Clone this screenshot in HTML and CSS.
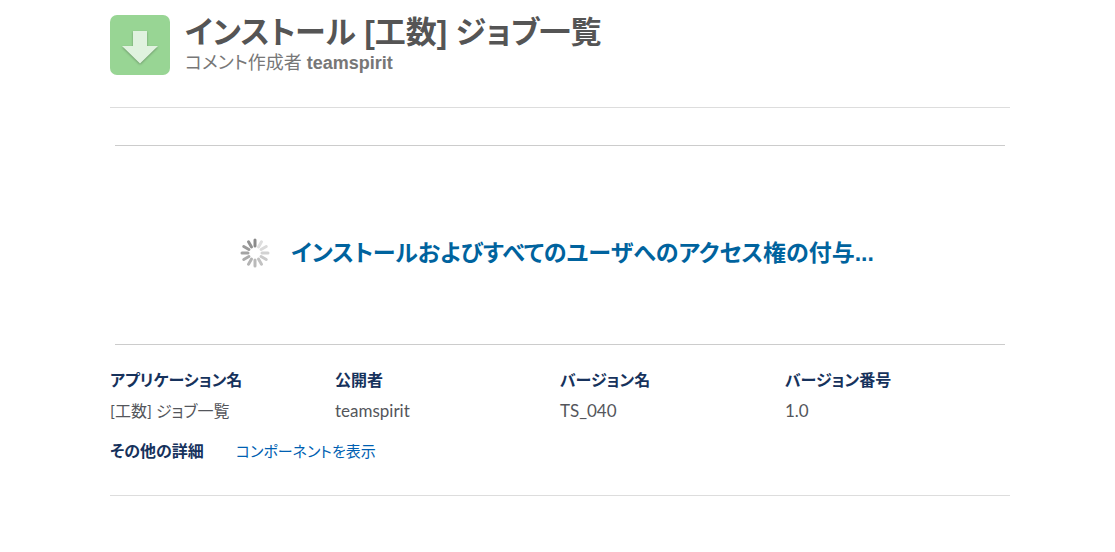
FILE: index.html
```html
<!DOCTYPE html>
<html lang="ja">

<head>
    <meta charset="UTF-8">
    <meta name="viewport" content="width=device-width, initial-scale=1.0">
    <title>インストール [工数] ジョブ一覧</title>
    <link rel="stylesheet" href="styles.css">
</head>

<body>
    <div class="container">
        <header class="header">
            <svg class="icon" viewBox="0 0 60 60" aria-hidden="true">
                <rect width="60" height="60" rx="7" fill="#98d594"/>
                <path class="arrow" d="M23 16h14v15h11L30 48.500 12 31h11z" fill="#e0f2df"/>
            </svg>
            <div>
                <h1 class="title">インストール [工数] ジョブ一覧</h1>
                <p class="author">コメント作成者 <strong>teamspirit</strong></p>
            </div>
        </header>
        <main>
            <div class="progress" role="status">
                <svg class="spinner" viewBox="-15 -15 30 30" aria-hidden="true">
                    <g stroke-width="3" stroke-linecap="round">
                        <path d="M0-7v-6" stroke="#8a8a8a"/>
                        <path d="M0-7v-6" stroke="#dedede" transform="rotate(30)"/>
                        <path d="M0-7v-6" stroke="#dadada" transform="rotate(60)"/>
                        <path d="M0-7v-6" stroke="#d2d2d2" transform="rotate(90)"/>
                        <path d="M0-7v-6" stroke="#cacaca" transform="rotate(120)"/>
                        <path d="M0-7v-6" stroke="#c2c2c2" transform="rotate(150)"/>
                        <path d="M0-7v-6" stroke="#bababa" transform="rotate(180)"/>
                        <path d="M0-7v-6" stroke="#b4b4b4" transform="rotate(210)"/>
                        <path d="M0-7v-6" stroke="#acacac" transform="rotate(240)"/>
                        <path d="M0-7v-6" stroke="#a4a4a4" transform="rotate(270)"/>
                        <path d="M0-7v-6" stroke="#9b9b9b" transform="rotate(300)"/>
                        <path d="M0-7v-6" stroke="#929292" transform="rotate(330)"/>
                    </g>
                </svg>
                <h2 class="message">インストールおよびすべてのユーザへのアクセス権の付与...</h2>
            </div>
            <dl class="info">
                <div>
                    <dt>アプリケーション名</dt>
                    <dd>[工数] ジョブ一覧</dd>
                </div>
                <div>
                    <dt>公開者</dt>
                    <dd class="latin">teamspirit</dd>
                </div>
                <div>
                    <dt>バージョン名</dt>
                    <dd class="latin">TS_040</dd>
                </div>
                <div>
                    <dt>バージョン番号</dt>
                    <dd class="latin">1.0</dd>
                </div>
            </dl>
            <div class="more">
                <strong>その他の詳細</strong>
                <a href="#">コンポーネントを表示</a>
            </div>
        </main>
    </div>
</body>

</html>
```
FILE: styles.css
```css
* {
    margin: 0;
    padding: 0;
    box-sizing: border-box;
}

body {
    background-color: #fff;
    color: #54565b;
    font-family: Lato, "Noto Sans CJK JP", sans-serif;
    font-size: 16px;
    line-height: 24px;
    /* かなをプロポーショナル幅で表示 */
    font-feature-settings: "palt";
}

.container {
    padding: 15px 105px 0 110px;
}

.header {
    display: flex;
    gap: 15px;
    padding-bottom: 32px;
    border-bottom: 1px solid #ddd;
}

.icon {
    flex: none;
    width: 60px;
    height: 60px;
}

.arrow {
    filter: drop-shadow(0 1px 1px rgba(0, 0, 0, 0.3));
}

.title,
.author,
.message {
    font-family: "Liberation Sans", "Noto Sans CJK JP", sans-serif;
}

.title {
    color: #555;
    font-size: 31px;
    line-height: 36px;
}

.author {
    color: #777;
    font-size: 18px;
    line-height: 24px;
}

.progress {
    display: flex;
    align-items: center;
    justify-content: center;
    gap: 21px;
    min-height: 200px;
    margin: 37px 5px 23px;
    padding: 15px 6px 0 0;
    border-top: 1px solid #ccc;
    border-bottom: 1px solid #ccc;
}

.spinner {
    flex: none;
    width: 30px;
    height: 30px;
}

.message {
    color: #00639e;
    font-size: 23px;
    line-height: 32px;
}

.info {
    display: grid;
    grid-template-columns: repeat(4, 1fr);
}

.info dt,
.more strong {
    color: #16325c;
    font-weight: bold;
}

.info dd {
    margin-top: 7px;
}

.info .latin {
    font-size: 17px;
}

.more {
    display: flex;
    gap: 32px;
    padding: 16px 0 32px;
    border-bottom: 1px solid #ddd;
}

.more a {
    color: #005fb2;
    font-size: 15px;
    text-decoration: none;
}
```
